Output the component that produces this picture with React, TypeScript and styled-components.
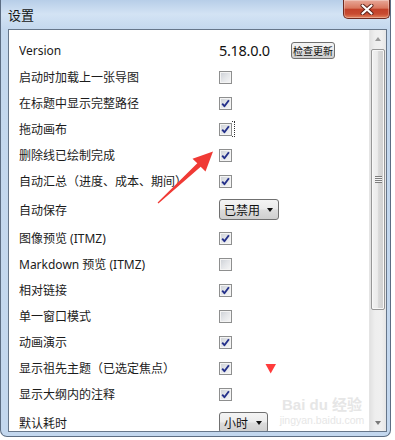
import React from 'react';
import styled, { createGlobalStyle } from 'styled-components';

const GlobalStyle = createGlobalStyle`
  html, body {
    margin: 0;
    padding: 0;
    background: #ffffff;
    overflow: hidden;
  }
`;

const Stage = styled.div`
  position: relative;
  width: 395px;
  height: 440px;
  font-family: 'Noto Sans', 'Noto Sans CJK SC', sans-serif;
`;

/* Windows 7 aero frame */
const Window = styled.div`
  width: 391px;
  height: 437px;
  box-sizing: border-box;
  border: 1px solid #5c6d83;
  border-top: none;
  border-radius: 0 0 7px 7px;
  background: linear-gradient(180deg, #b7cee8 0%, #d3e3f4 14px, #c4d8ee 29px, #c3d7ee 100%);
  display: flex;
  flex-direction: column;
`;

const TitleBar = styled.div`
  height: 29px;
  flex-shrink: 0;
  display: flex;
  align-items: flex-start;
  justify-content: space-between;
  padding-left: 7px;
`;

const Title = styled.div`
  margin-top: 6px;
  font-family: 'Noto Sans CJK SC', sans-serif;
  font-size: 13px;
  line-height: 17px;
  color: #141414;
`;

const CloseBtn = styled.div`
  width: 47px;
  height: 19px;
  box-sizing: border-box;
  border: 1px solid #6e2a20;
  border-top: none;
  border-radius: 0 0 5px 5px;
  background: linear-gradient(180deg, #e8a899 0%, #d9775f 45%, #c2412a 52%, #c84b31 78%, #e3845f 100%);
  box-shadow: inset 0 0 0 1px rgba(255, 255, 255, 0.3);
  display: flex;
  align-items: center;
  justify-content: center;
`;

const Body = styled.div`
  flex: 1;
  min-height: 0;
  display: flex;
  padding: 0 3px 4px 7px;
`;

const Panel = styled.div`
  width: 379px;
  box-sizing: border-box;
  border: 1px solid #66768a;
  background: #ffffff;
  display: flex;
  overflow: hidden;
`;

const List = styled.div`
  flex: 1;
  padding: 6px 0 0 10px;
  overflow: hidden;
`;

const Row = styled.div<{ $h: number }>`
  height: ${(p) => p.$h}px;
  display: flex;
  align-items: center;
`;

const Label = styled.div`
  width: 200px;
  flex-shrink: 0;
  white-space: nowrap;
  overflow: hidden;
  font-size: 12px;
  color: #1b1b1b;
`;

const Controls = styled.div`
  display: flex;
  align-items: center;
`;

const VersionText = styled.div`
  width: 72px;
  font-size: 14.5px;
  letter-spacing: -0.3px;
  color: #111;
`;

const PushButton = styled.div`
  width: 44px;
  height: 17px;
  box-sizing: border-box;
  border: 1px solid #707070;
  border-radius: 3px;
  background: linear-gradient(180deg, #f4f4f4 0%, #ebebeb 48%, #dcdcdc 52%, #cfcfcf 100%);
  display: flex;
  align-items: center;
  justify-content: center;
  font-family: 'Noto Sans CJK SC', sans-serif;
  font-size: 10px;
  color: #111;
`;

const Box = styled.span`
  width: 13px;
  height: 13px;
  box-sizing: border-box;
  border: 1px solid #8e8f8f;
  background: linear-gradient(135deg, #cbcfd5 0%, #e4e6e9 50%, #f7f7f7 100%);
  box-shadow: inset 0 0 0 1px #f4f4f4;
  display: flex;
  align-items: center;
  justify-content: center;
`;

const FocusRing = styled.span`
  width: 3px;
  height: 16px;
  box-sizing: border-box;
  border: 1px dotted #333;
  border-left: none;
`;

const Select = styled.div<{ $w: number }>`
  width: ${(p) => p.$w}px;
  height: 21px;
  box-sizing: border-box;
  border: 1px solid #707070;
  border-radius: 3px;
  background: linear-gradient(180deg, #f4f4f4 0%, #ebebeb 48%, #dcdcdc 52%, #cfcfcf 100%);
  display: flex;
  align-items: center;
  justify-content: space-between;
  padding: 0 5px 0 4px;
  font-family: 'Noto Sans CJK SC', sans-serif;
  font-size: 12px;
  color: #111;
`;

const Caret = styled.span`
  width: 0;
  height: 0;
  border-left: 3.5px solid transparent;
  border-right: 3.5px solid transparent;
  border-top: 4px solid #111;
`;

/* scrollbar */
const ScrollBar = styled.div`
  width: 16px;
  flex-shrink: 0;
  display: flex;
  flex-direction: column;
  background: linear-gradient(90deg, #e2e2e2 0%, #eeeeee 30%, #f0f0f0 70%, #e6e6e6 100%);
  border-left: 1px solid #e4e4e4;
`;

const ArrowBtn = styled.div`
  height: 17px;
  flex-shrink: 0;
  display: flex;
  align-items: center;
  justify-content: center;
`;

const Tri = styled.span<{ $down?: boolean }>`
  width: 0;
  height: 0;
  border-left: 3.5px solid transparent;
  border-right: 3.5px solid transparent;
  ${(p) => (p.$down ? 'border-top: 4px solid #7a7a7a;' : 'border-bottom: 4px solid #9a9a9a;')}
`;

const Thumb = styled.div`
  margin: 2px 1px 0 1px;
  height: 261px;
  flex-shrink: 0;
  box-sizing: border-box;
  border: 1px solid #979797;
  border-radius: 2px;
  background: linear-gradient(90deg, #f2f2f2 0%, #ebebeb 45%, #d9d9d9 55%, #d0d0d0 100%);
  box-shadow: inset 0 0 0 1px #f8f8f8;
  display: flex;
  align-items: center;
  justify-content: center;
`;

const Grip = styled.div`
  width: 7px;
  height: 7px;
  background: repeating-linear-gradient(180deg, #7d7d7d 0, #7d7d7d 1px, #f3f3f3 1px, #f3f3f3 2px);
`;

const Spacer = styled.div`
  flex: 1;
`;

/* annotations over the screenshot */
const Overlay = styled.svg`
  position: absolute;
  left: 0;
  top: 0;
  pointer-events: none;
`;

const Watermark = styled.div`
  position: absolute;
  left: 277px;
  top: 386px;
  width: 90px;
  display: flex;
  flex-direction: column;
  align-items: center;
  color: #e6e6e6;
  pointer-events: none;
`;

const WmBig = styled.div`
  font-family: 'Liberation Sans', 'Noto Sans CJK SC', sans-serif;
  font-size: 15px;
  font-weight: bold;
  line-height: 18px;
  margin-top: 10px;
`;

const WmSmall = styled.div`
  font-family: 'Liberation Sans', sans-serif;
  font-size: 10.5px;
  line-height: 12px;
`;

type Item =
  | { kind: 'version'; label: string }
  | { kind: 'check'; label: string; checked: boolean; focus?: boolean }
  | { kind: 'select'; label: string; value: string; width: number };

const items: Item[] = [
  { kind: 'version', label: 'Version' },
  { kind: 'check', label: '启动时加载上一张导图', checked: false },
  { kind: 'check', label: '在标题中显示完整路径', checked: true },
  { kind: 'check', label: '拖动画布', checked: true, focus: true },
  { kind: 'check', label: '删除线已绘制完成', checked: true },
  { kind: 'check', label: '自动汇总（进度、成本、期间）', checked: true },
  { kind: 'select', label: '自动保存', value: '已禁用', width: 60 },
  { kind: 'check', label: '图像预览 (ITMZ)', checked: true },
  { kind: 'check', label: 'Markdown 预览 (ITMZ)', checked: false },
  { kind: 'check', label: '相对链接', checked: true },
  { kind: 'check', label: '单一窗口模式', checked: false },
  { kind: 'check', label: '动画演示', checked: true },
  { kind: 'check', label: '显示祖先主题（已选定焦点）', checked: true },
  { kind: 'check', label: '显示大纲内的注释', checked: true },
  { kind: 'select', label: '默认耗时', value: '小时', width: 49 },
];

function CheckBox({ checked }: { checked: boolean }) {
  return (
    <Box>
      {checked && (
        <svg width="9" height="9" viewBox="0 0 9 9">
          <path d="M1.2 4.6 L3.4 7.2 L7.9 1.2" fill="none" stroke="#24308a" strokeWidth="1.9" strokeLinejoin="round" />
        </svg>
      )}
    </Box>
  );
}

function SettingRow({ item }: { item: Item }) {
  if (item.kind === 'version') {
    return (
      <Row $h={28}>
        <Label>{item.label}</Label>
        <Controls>
          <VersionText>5.18.0.0</VersionText>
          <PushButton>检查更新</PushButton>
        </Controls>
      </Row>
    );
  }
  if (item.kind === 'select') {
    return (
      <Row $h={31}>
        <Label>{item.label}</Label>
        <Select $w={item.width}>
          <span>{item.value}</span>
          <Caret />
        </Select>
      </Row>
    );
  }
  return (
    <Row $h={26}>
      <Label>{item.label}</Label>
      <Controls>
        <CheckBox checked={item.checked} />
        {item.focus && <FocusRing />}
      </Controls>
    </Row>
  );
}

export default function App() {
  return (
    <Stage>
      <GlobalStyle />
      <Window>
        <TitleBar>
          <Title>设置</Title>
          <CloseBtn>
            <svg width="14" height="11" viewBox="0 0 14 11">
              <path d="M2.5 1.5 L11.5 9.5 M11.5 1.5 L2.5 9.5" stroke="#5a2018" strokeWidth="4" strokeLinecap="round" />
              <path d="M2.5 1.5 L11.5 9.5 M11.5 1.5 L2.5 9.5" stroke="#ffffff" strokeWidth="2.2" strokeLinecap="round" />
            </svg>
          </CloseBtn>
        </TitleBar>
        <Body>
          <Panel>
            <List>
              {items.map((it) => (
                <SettingRow key={it.label} item={it} />
              ))}
            </List>
            <ScrollBar>
              <ArrowBtn>
                <Tri />
              </ArrowBtn>
              <Thumb>
                <Grip />
              </Thumb>
              <Spacer />
              <ArrowBtn>
                <Tri $down />
              </ArrowBtn>
            </ScrollBar>
          </Panel>
        </Body>
      </Window>

      <Watermark>
        <WmBig>Bai du 经验</WmBig>
        <WmSmall>jingyan.baidu.com</WmSmall>
      </Watermark>

      <Overlay width="395" height="440" viewBox="0 0 395 440">
        <polygon
          points="157.6,202.6 197.3,163.2 192.5,158.8 213,151.5 205.5,171.5 200.7,166.8 158.4,203.4"
          fill="#f03a35"
        />
        <polygon points="265.5,364 276,364 270.7,373.5" fill="#ff3b3b" />
      </Overlay>
    </Stage>
  );
}
